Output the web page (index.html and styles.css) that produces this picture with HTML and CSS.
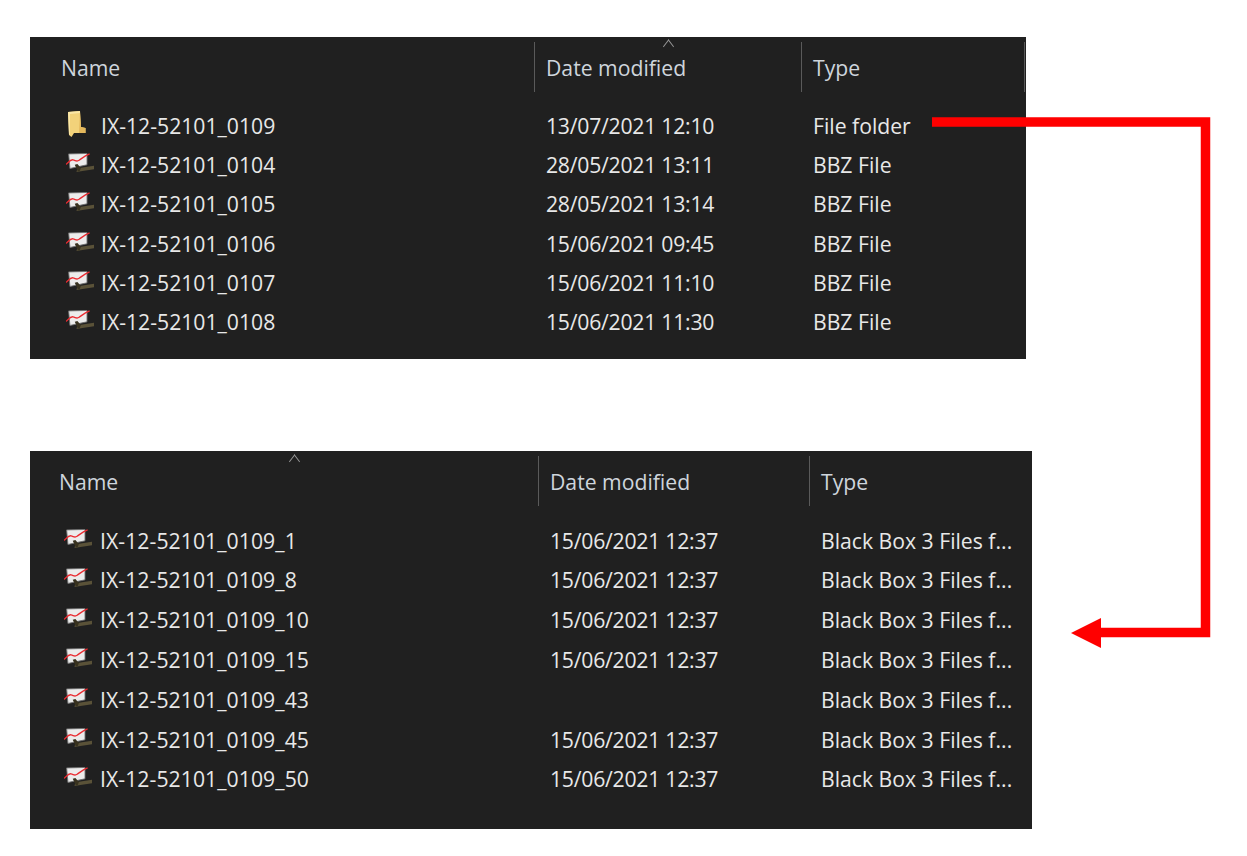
FILE: index.html
```html
<!DOCTYPE html>
<html lang="en">
<head>
<meta charset="utf-8">
<title>File listing</title>
<link rel="stylesheet" href="styles.css">
</head>
<body>
<svg class="defs" width="0" height="0" aria-hidden="true">
  <symbol id="bbz" viewBox="0 0 32 22" preserveAspectRatio="none">
    <path d="M3 1 L24 0.5 L24 13 L4.5 17 Z" fill="#ececec" stroke="#707070" stroke-width="1"/>
    <path d="M0 12.5 C3 10 5 7 8 7.5 C11 8 12 10 15 8 C18 6 21 3 27 1" fill="none" stroke="#ea2a30" stroke-width="1.5"/>
    <path d="M15 16.5 L32 14 L32 18 L17 20 L12 21 L13 17 Z" fill="#5a5238"/>
    <path d="M10 13 L13 12 L17 16.5 L15.5 20 L13.5 20 Z" fill="#38321f"/>
  </symbol>
  <symbol id="folder" viewBox="0 0 18 26">
    <path d="M0 1 L12 0 L13 16 L17.5 17 L17.5 22 L6 22 L3.5 26 L1 24 Z" fill="#f2d27a"/>
    <path d="M0 1 L12 0 L12 2 L2 3 L2 23 L1 24 Z" fill="#fbe7a6"/>
    <path d="M12 1 L13 16 L17.5 17 L17.5 22 L11 22 Z" fill="#e4b85c"/>
  </symbol>
</svg>

<main class="page">
  <section class="panel panel-top">
    <div class="head">
      <div class="col col-name">Name</div>
      <div class="col col-date has-rule"><span class="caret caret-date"></span>Date modified</div>
      <div class="col col-type has-rule">Type</div>
    </div>
    <div class="rows">
      <div class="row"><span class="name"><svg class="ico-folder"><use href="#folder"/></svg>IX-12-52101_0109</span><span class="date">13/07/2021 12:10</span><span class="type">File folder</span></div>
      <div class="row"><span class="name"><svg class="ico"><use href="#bbz"/></svg>IX-12-52101_0104</span><span class="date">28/05/2021 13:11</span><span class="type">BBZ File</span></div>
      <div class="row"><span class="name"><svg class="ico"><use href="#bbz"/></svg>IX-12-52101_0105</span><span class="date">28/05/2021 13:14</span><span class="type">BBZ File</span></div>
      <div class="row"><span class="name"><svg class="ico"><use href="#bbz"/></svg>IX-12-52101_0106</span><span class="date">15/06/2021 09:45</span><span class="type">BBZ File</span></div>
      <div class="row"><span class="name"><svg class="ico"><use href="#bbz"/></svg>IX-12-52101_0107</span><span class="date">15/06/2021 11:10</span><span class="type">BBZ File</span></div>
      <div class="row"><span class="name"><svg class="ico"><use href="#bbz"/></svg>IX-12-52101_0108</span><span class="date">15/06/2021 11:30</span><span class="type">BBZ File</span></div>
    </div>
  </section>

  <section class="panel panel-bottom">
    <div class="head">
      <div class="col col-name"><span class="caret caret-name"></span>Name</div>
      <div class="col col-date has-rule">Date modified</div>
      <div class="col col-type has-rule">Type</div>
    </div>
    <div class="rows">
      <div class="row"><span class="name"><svg class="ico"><use href="#bbz"/></svg>IX-12-52101_0109_1</span><span class="date">15/06/2021 12:37</span><span class="type">Black Box 3 Files f...</span></div>
      <div class="row"><span class="name"><svg class="ico"><use href="#bbz"/></svg>IX-12-52101_0109_8</span><span class="date">15/06/2021 12:37</span><span class="type">Black Box 3 Files f...</span></div>
      <div class="row"><span class="name"><svg class="ico"><use href="#bbz"/></svg>IX-12-52101_0109_10</span><span class="date">15/06/2021 12:37</span><span class="type">Black Box 3 Files f...</span></div>
      <div class="row"><span class="name"><svg class="ico"><use href="#bbz"/></svg>IX-12-52101_0109_15</span><span class="date">15/06/2021 12:37</span><span class="type">Black Box 3 Files f...</span></div>
      <div class="row"><span class="name"><svg class="ico"><use href="#bbz"/></svg>IX-12-52101_0109_43</span><span class="date"></span><span class="type">Black Box 3 Files f...</span></div>
      <div class="row"><span class="name"><svg class="ico"><use href="#bbz"/></svg>IX-12-52101_0109_45</span><span class="date">15/06/2021 12:37</span><span class="type">Black Box 3 Files f...</span></div>
      <div class="row"><span class="name"><svg class="ico"><use href="#bbz"/></svg>IX-12-52101_0109_50</span><span class="date">15/06/2021 12:37</span><span class="type">Black Box 3 Files f...</span></div>
    </div>
  </section>
</main>

<svg class="arrow" width="1247" height="856" viewBox="0 0 1247 856" aria-hidden="true">
  <path d="M932 122 H1205.5 V632.5 H1095" fill="none" stroke="#ff0000" stroke-width="9.5"/>
  <path d="M1071 633 L1101 618 V648 Z" fill="#ff0000"/>
</svg>
</body>
</html>
```
FILE: styles.css
```css
* { box-sizing: border-box; }
html, body { margin: 0; padding: 0; background: #fff; }
body {
  width: 1247px;
  height: 856px;
  overflow: hidden;
  position: relative;
  font-family: "Open Sans", "Noto Sans", "Liberation Sans", sans-serif;
  font-size: 21.2px;
  color: #e8e8e8;
}
.defs { position: absolute; }
.page {
  display: flex;
  flex-direction: column;
  gap: 92px;
  padding: 37px 0 0 30px;
}
.panel { background: #202020; }
.panel-top { width: 996px; height: 322px; --c1: 504px; --c2: 267px; --pad: 31px; --ico: 36px; --ico-gap: 7px; --name-track: 0; }
.panel-bottom { width: 1002px; height: 378px; --c1: 508px; --c2: 271px; --pad: 29px; --ico: 34px; --ico-gap: 8px; --name-track: 0.06px; }
.head, .row {
  display: grid;
  grid-template-columns: var(--c1) var(--c2) 1fr;
}
.head {
  height: 50px;
  margin-top: 5px;
  color: #ced5dc;
  align-items: stretch;
}
.col {
  position: relative;
  display: flex;
  align-items: center;
  padding-left: 11px;
  border-left: 1px solid transparent;
  font-size: 21.2px;
  padding-top: 1px;
}
.col-name { padding-left: var(--pad); border-left: 0; }
.has-rule { border-left-color: #5a5a5a; }
.panel-top .col-type { border-right: 1px solid #5a5a5a; margin-right: 1px; }
.panel-top .rows { margin-top: 14.2px; }
.panel-bottom .rows { margin-top: 14.6px; }
.panel-top .row { height: 39.3px; }
.panel-bottom .row { height: 39.83px; }
.row { align-items: center; }
.row > span { padding-left: 12px; white-space: nowrap; line-height: 26px; }
.row > .date { letter-spacing: -0.24px; }
.row > .type { font-size: 21.2px; }
.row > .name {
  display: flex;
  align-items: center;
  padding-left: var(--ico);
  letter-spacing: var(--name-track);
}
.ico {
  width: 28px;
  height: 20px;
  margin-right: var(--ico-gap);
  flex: none;
  transform: translateY(-2px);
}
.ico-folder {
  width: 18px;
  height: 26px;
  margin-left: 2px;
  margin-right: 15px;
  flex: none;
  transform: translateY(-2px);
}
.caret {
  position: absolute;
  width: 9px;
  height: 9px;
  border-top: 1px solid #9a9a9a;
  border-left: 1px solid #9a9a9a;
  transform: rotate(45deg) skew(8deg, 8deg);
}
.caret-date { left: 129px; top: 0; }
.caret-name { left: 260px; top: 1px; }
.arrow { position: absolute; left: 0; top: 0; pointer-events: none; }
```
